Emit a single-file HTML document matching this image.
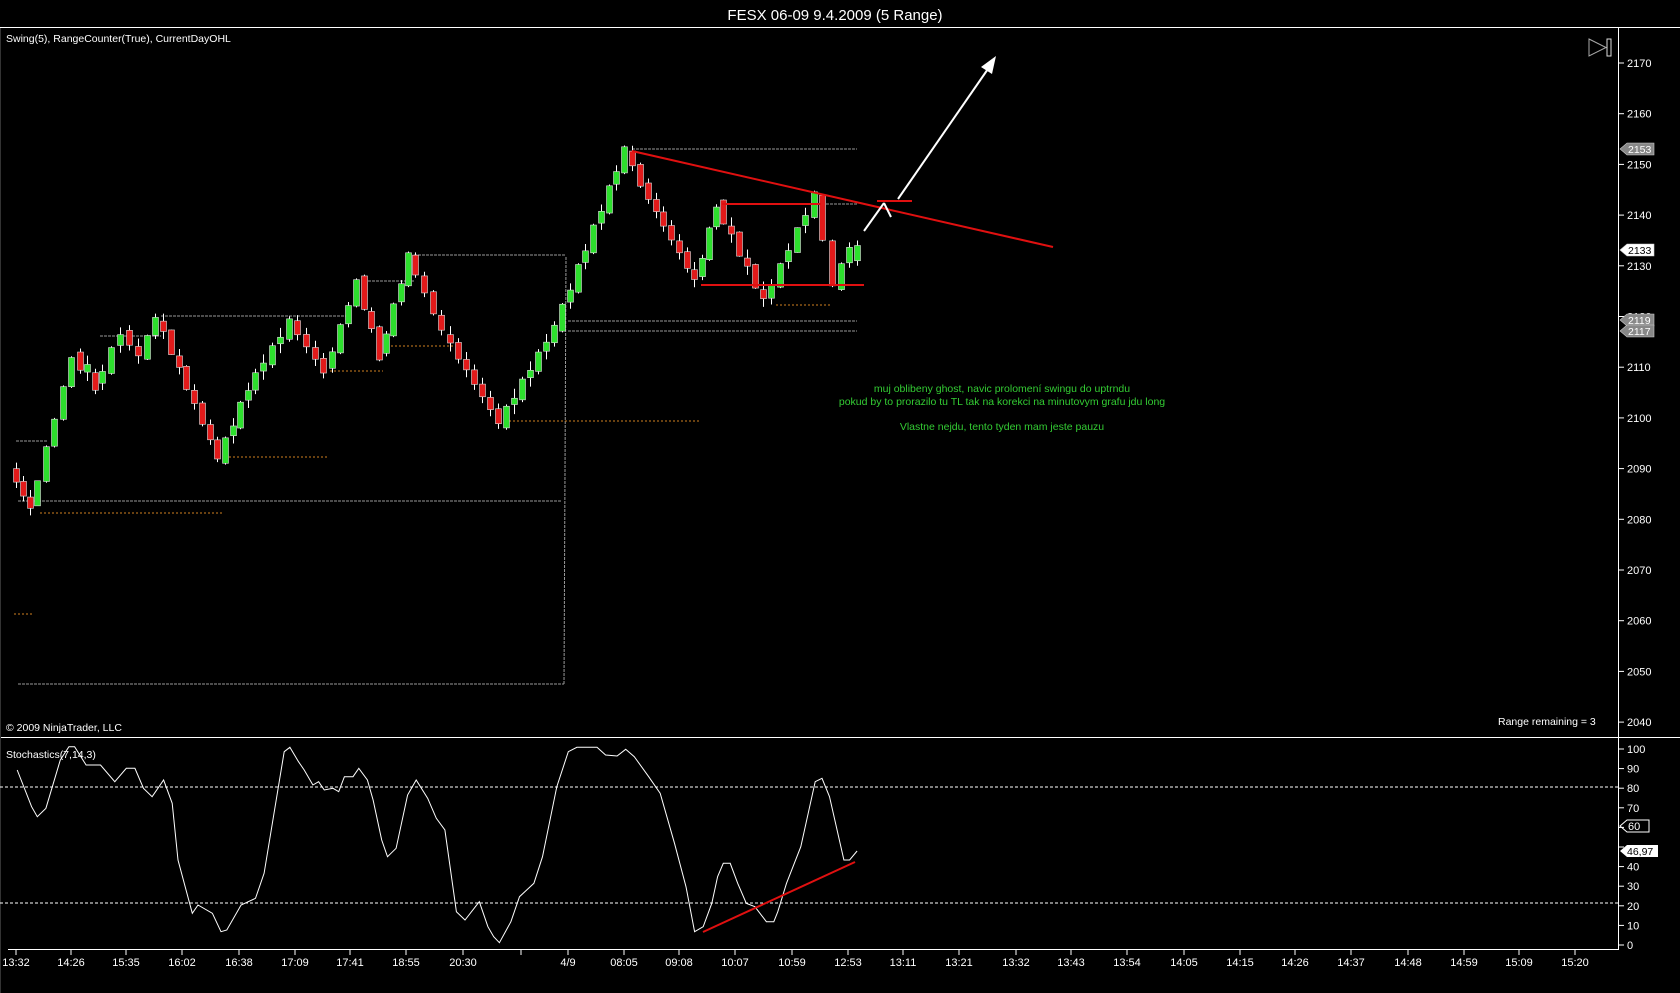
<!DOCTYPE html>
<html><head><meta charset="utf-8"><style>
html,body{margin:0;padding:0;background:#000;width:1680px;height:993px;overflow:hidden}
svg{display:block}
text{font-family:"Liberation Sans",sans-serif}
</style></head><body>
<svg id="s" width="1680" height="993" xmlns="http://www.w3.org/2000/svg">
<rect width="1680" height="993" fill="#000"/>
<text x="835" y="20" fill="#fff" font-size="15" text-anchor="middle">FESX 06-09  9.4.2009 (5 Range)</text>
<line x1="0" y1="27.5" x2="1680" y2="27.5" stroke="#fff"/>
<line x1="1618.5" y1="28" x2="1618.5" y2="950" stroke="#fff"/>
<line x1="0" y1="737.5" x2="1680" y2="737.5" stroke="#fff"/>
<line x1="8" y1="949.5" x2="1619" y2="949.5" stroke="#fff"/>
<line x1="0.5" y1="28" x2="0.5" y2="993" stroke="#333"/>
<text x="6" y="42" fill="#fff" font-size="10.5">Swing(5), RangeCounter(True), CurrentDayOHL</text>
<text x="6" y="731" fill="#fff" font-size="10.5">© 2009 NinjaTrader, LLC</text>
<text x="1498" y="725" fill="#fff" font-size="10.5">Range remaining = 3</text>
<text x="6" y="758" fill="#fff" font-size="10.5">Stochastics(7,14,3)</text>
<polygon points="1589,39 1606,47.5 1589,56" fill="none" stroke="#aaa"/>
<rect x="1607" y="39" width="4" height="17" fill="none" stroke="#ddd"/>
<g id="g"></g>
<g fill="#3c3" font-size="10.5" text-anchor="middle">
<text x="1002" y="392">muj oblibeny ghost, navic prolomení swingu do uptrndu</text>
<text x="1002" y="405">pokud by to prorazilo tu TL tak na korekci na minutovym grafu jdu long</text>
<text x="1002" y="430">Vlastne nejdu, tento tyden mam jeste pauzu</text>
</g>
</svg>
<script>
var g=document.getElementById('g'),h='';
function Y(p){return 63+(2170-p)*5.07}
function L(x1,y1,x2,y2,c,w,d){h+='<line x1="'+x1+'" y1="'+y1+'" x2="'+x2+'" y2="'+y2+'" stroke="'+c+'" stroke-width="'+(w||1)+'"'+(d?' stroke-dasharray="'+d+'"':'')+'/>';}
function T(x,y,t,a){h+='<text x="'+x+'" y="'+y+'" fill="#fff" font-size="11"'+(a?' text-anchor="'+a+'"':'')+'>'+t+'</text>';}
for(var p=2040;p<=2170;p+=10){var y=Y(p);L(1618,y,1624,y,'#fff');T(1627,y+4,p);}
function S(v){return 749+(100-v)*1.96}
for(var v=0;v<=100;v+=10){var y=S(v);L(1618,y,1624,y,'#fff');if(v!=60&&v!=50)T(1627,y+4,v);}
L(0,787,1618,787,'#fff',1,'3,2');L(0,903,1618,903,'#fff',1,'3,2');
var tl=[[16,'13:32'],[71,'14:26'],[126,'15:35'],[182,'16:02'],[239,'16:38'],[295,'17:09'],[350,'17:41'],[406,'18:55'],[463,'20:30'],[521,''],[568,'4/9'],[624,'08:05'],[679,'09:08'],[735,'10:07'],[792,'10:59'],[848,'12:53'],[903,'13:11'],[959,'13:21'],[1016,'13:32'],[1071,'13:43'],[1127,'13:54'],[1184,'14:05'],[1240,'14:15'],[1295,'14:26'],[1351,'14:37'],[1408,'14:48'],[1464,'14:59'],[1519,'15:09'],[1575,'15:20']];
tl.forEach(function(t){L(t[0],949,t[0],955,'#fff');if(t[1])T(t[0],966,t[1],'middle');});
var gr='#999',or='#d08020';
L(16,441,48,441,gr,1,'3,1');L(18,501,562,501,gr,1,'3,1');L(18,684,564,684,gr,1,'3,1');
L(564,684,566,256,gr,1,'3,1');L(414,255,566,255,gr,1,'3,1');L(364,281,414,281,gr,1,'3,1');
L(161,316,348,316,gr,1,'3,1');L(568,321,857,321,gr,1,'3,1');L(568,331,857,331,gr,1,'3,1');
L(632,149,857,149,gr,1,'3,1');L(100,336,161,336,gr,1,'3,1');L(722,204,857,204,gr,1,'3,1');
L(40,513,222,513,or,1,'2,2');L(225,457,327,457,or,1,'2,2');L(330,371,383,371,or,1,'2,2');L(391,346,453,346,or,1,'2,2');
L(509,421,699,421,or,1,'2,2');L(776,305,831,305,or,1,'2,2');L(14,614,32,614,or,1,'2,2');
var piv=[[16,2090],[37,2082],[80,2112],[102,2106],[129,2117],[147,2112],[163,2120],[225,2092],[255,2106],[297,2119],[332,2109],[364,2127],[386,2112],[415,2132],[450,2117],[506,2099],[562,2118],[632,2153],[648,2146],[702,2127],[723,2142],[771,2123],[822,2144],[841,2126],[857,2134]];
var bars=[];
for(var i=0;i<piv.length-1;i++){var a=piv[i],b=piv[i+1];var n=Math.max(1,Math.round((b[0]-a[0])/7.85));for(var k=0;k<n;k++){var x=a[0]+(b[0]-a[0])*k/n;var o=a[1]+(b[1]-a[1])*k/n,c=a[1]+(b[1]-a[1])*(k+1)/n;var w=Math.sin(i*7+k*3)*2;bars.push([x,o+w*0.5,c-w*0.3]);}}
bars.push([857,2131,2134]);
bars.forEach(function(B,j){var x=Math.round(B[0])+0.5,o=B[1],c=B[2];if(Math.abs(c-o)<1)c=o+(j%2?1.5:-1.5);var hi=Math.max(o,c),lo=Math.min(o,c);var ext=(5-(hi-lo))>0?(5-(hi-lo)):0.5;var wh=hi+ext*0.5,wl=lo-ext*0.5;L(x,Y(wh),x,Y(wl),'#fff');var up=c>o;h+='<rect x="'+(x-3)+'" y="'+Y(hi)+'" width="6" height="'+Math.max(2,(hi-lo)*5.07)+'" fill="'+(up?'#2de02d':'#e21a1a')+'" stroke="#ddd" stroke-width="0.6"/>';});
L(632,151,1053,247,'#e01010',2);L(722,204,821,204,'#e01010',2);L(701,285,864,285,'#e01010',2);L(877,201,912,201,'#e01010',2);
L(864,231,884,203,'#fff',2);L(884,203,891,217,'#fff',2);
L(898,199,990,66,'#fff',2);h+='<polygon points="996,56 981,67 992,74" fill="#fff"/>';
function PL(y,t,bg,fg){h+='<polygon points="1620,'+y+' 1627,'+(y-6)+' 1654,'+(y-6)+' 1654,'+(y+6)+' 1627,'+(y+6)+'" fill="'+bg+'" stroke="#ccc" stroke-width="0.6"/>';h+='<text x="1628" y="'+(y+4)+'" fill="'+fg+'" font-size="10.5">'+t+'</text>';}
PL(149,'2153','#888','#fff');PL(250,'2133','#fff','#000');PL(320,'2119','#888','#fff');PL(331,'2117','#888','#fff');
h+='<polygon points="1620,826 1627,820 1649,820 1649,832 1627,832" fill="none" stroke="#fff"/>';T(1628,830,'60');
h+='<polygon points="1620,851 1627,845 1658,845 1658,857 1627,857" fill="#fff"/>';h+='<text x="1627" y="855" fill="#000" font-size="10.5">46,97</text>';
var sp=[[30,150],[55,260],[65,290],[80,265],[105,120],[120,80],[130,80],[150,135],[175,135],[200,185],[220,145],[235,145],[250,205],[265,230],[285,180],[300,250],[310,420],[335,580],[345,555],[370,580],[385,635],[395,630],[420,555],[445,535],[460,460],[485,200],[495,95],[505,82],[520,125],[530,150],[545,195],[555,185],[565,210],[580,205],[590,215],[600,170],[615,170],[625,145],[640,180],[650,240],[665,360],[675,410],[690,385],[710,225],[725,180],[745,235],[760,295],[775,330],[795,575],[810,600],[835,545],[850,620],[860,650],[870,668],[890,605],[905,530],[930,490],[945,410],[970,200],[990,95],[1005,82],[1040,82],[1055,105],[1075,108],[1090,88],[1105,110],[1130,170],[1150,220],[1175,370],[1195,500],[1210,635],[1225,620],[1240,550],[1250,470],[1260,430],[1272,430],[1285,490],[1300,550],[1315,560],[1335,605],[1348,605],[1355,575],[1370,490],[1395,380],[1420,185],[1432,175],[1445,230],[1470,420],[1480,420],[1493,393]];
h+='<polyline fill="none" stroke="#fff" stroke-width="1" points="'+sp.map(function(p){return (p[0]/1.742).toFixed(1)+','+(720+p[1]/3).toFixed(1)}).join(' ')+'"/>';
L(703,932,855,862,'#e01010',2);
g.innerHTML=h;
</script>
</body></html>
